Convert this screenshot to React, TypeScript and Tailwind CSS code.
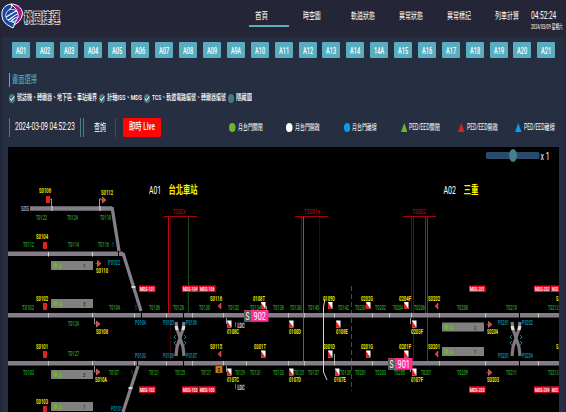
import React from 'react';

const FONT = "font-['Roboto','Noto_Sans_CJK_TC',sans-serif]";

function Narrow({ w, children, className = '' }: { w: number; children: string; className?: string }) {
  const box = React.useRef<HTMLSpanElement>(null);
  const [scale, setScale] = React.useState(0.7);
  React.useLayoutEffect(() => {
    if (box.current && box.current.offsetWidth) setScale(w / box.current.offsetWidth);
  }, [w, children]);
  return (
    <span className={`block shrink-0 whitespace-nowrap ${className}`} style={{ width: w }}>
      <span ref={box} className="inline-block origin-left" style={{ transform: `scaleX(${scale})` }}>
        {children}
      </span>
    </span>
  );
}

const nav: [string, number][] = [
  ['首頁', 13], ['時空圖', 18], ['軌道狀態', 24], ['異常狀態', 24], ['異常標記', 24], ['列車計算', 24],
];
const stations = ['A01', 'A02', 'A03', 'A04', 'A05', 'A06', 'A07', 'A08', 'A09', 'A9A', 'A10', 'A11', 'A12', 'A13', 'A14', '14A', 'A15', 'A16', 'A17', 'A18', 'A19', 'A20', 'A21'];

function Logo() {
  return (
    <svg className="h-8 w-[64px] shrink-0" viewBox="0 0 64 32">
      <path d="M11 4C3 5 0 12 3 20c2 4 6 6 10 8l2-5C7 21 5 12 12 7z" fill="#1747a0" stroke="#fff" strokeWidth="1" />
      <path d="M11 4c8 0 13 6 11 12-1 4-4 7-8 9 4-7 5-12 1-17z" fill="#ac168a" stroke="#fff" strokeWidth="1" />
      <circle cx="12" cy="15.5" r="6.3" fill="#1747a0" stroke="#fff" strokeWidth=".8" />
      <path d="M6 17c5-2 6-5 11-6M8 20c4-1 5-5 10-6M11 21c2-1 4-4 7-4" fill="none" stroke="#fff" strokeWidth="1.2" />
      <text x="24" y="21.500" fontSize="13" fontWeight="700" textLength="36" lengthAdjust="spacingAndGlyphs" fill="#262024" stroke="#e4e0e2" strokeWidth="1.6" paintOrder="stroke">桃園捷運</text>
    </svg>
  );
}

function Check({ on = true }: { on?: boolean }) {
  return (
    <svg className="h-[9px] w-[6px] shrink-0" viewBox="0 0 6 9" preserveAspectRatio="none">
      <ellipse cx="3" cy="4.5" rx="3" ry="4.5" fill="#4a7884" />
      {on && <path d="M1 4.7l1.4 1.8 2.8-4" fill="none" stroke="#fff" />}
    </svg>
  );
}

function Legend({ shape, fill, label, w }: { shape: 'dot' | 'tri'; fill: string; label: string; w: number }) {
  return (
    <div className="flex w-[57.3px] shrink-0 items-center gap-[2px] text-[8.5px] leading-[10px] text-white">
      <svg className="h-[9px] w-[6.5px] shrink-0" viewBox="0 0 6.5 9">
        {shape === 'dot' ? <ellipse cx="3.25" cy="4.5" rx="3.25" ry="4.5" fill={fill} /> : <path d="M3.25 0L6.5 9H0z" fill={fill} />}
      </svg>
      <Narrow w={w}>{label}</Narrow>
    </div>
  );
}

type Label = [number, number, number, string];
const green: Label[] = [
  [36, 220, 11, 'T0122'], [67, 220, 11, 'T0124'], [100, 220, 11, 'T0118'],
  [23, 247, 11, 'T0112'], [68, 247, 11, 'T0114'], [98, 247, 11, 'T0116'],
  [22, 310, 12, 'T0102'], [109, 310, 11, 'T0104'], [149, 310, 11, 'T0106'], [173, 310, 11, 'T0128'],
  [199, 310, 11, 'T0130'], [228, 310, 11, 'T0132'], [250, 310, 11, 'T0134'], [273, 310, 11, 'T0136'], [290, 310, 11, 'T0138'], [308, 310, 11, 'T0140'], [338, 310, 11, 'T0142'],
  [355, 310, 11, 'T0200'], [375, 310, 11, 'T0202'], [393, 310, 10, 'T0204'], [414, 310, 11, 'T0206'],
  [457, 310, 11, 'T0208'], [506, 310, 11, 'T0210'], [548, 310, 10.5, 'T0212'],
  [68, 326, 11, 'T0124'], [68, 356, 11, 'T0127'],
  [23, 375, 11, 'T0103'], [109, 375, 10, 'T0107'], [149, 375, 10, 'T0121'], [175, 375, 10, 'T0125'],
  [201, 375, 10, 'T0127'], [235, 375, 10, 'T0129'], [250, 375, 11, 'T0131'], [273, 375, 11, 'T0133'], [294, 375, 10, 'T0135'], [308, 375, 11, 'T0137'],
  [340, 375, 11, 'T0139'], [355, 375, 11, 'T0201'], [375, 375, 11, 'T0203'], [394, 375, 11, 'T0205'],
  [421, 375, 10, 'T0207'], [457, 375, 11, 'T0209'], [506, 375, 11, 'T0211'], [548, 375, 10.5, 'T0213'],
];
const cyan: Label[] = [
  [108, 265, 12, 'P0102'], [135, 325, 11, 'P0104'], [163, 325, 11, 'P0105'], [186, 325, 11, 'P0106'],
  [135, 358, 11, 'P0103'], [163, 358, 11, 'P0106'], [186, 358, 11, 'P0107'], [111, 411, 11, 'P0101'],
  [498, 325, 11, 'P0201'], [522, 325, 11, 'P0202'], [498, 358, 11, 'P0201'], [522, 358, 11, 'P0204'],
  [112, 247, 2, '1'], [135, 310, 2, '1'], [131, 375, 2, '1'],
];
const yellow: Label[] = [
  [39, 193, 12, 'S0106'], [101, 195, 12, 'S0112'], [36, 239, 12, 'S0104'], [96, 273, 12, 'S0110'],
  [36, 301, 12, 'S0102'], [96, 334, 12, 'S0108'], [36, 349, 12, 'S0101'], [95, 382, 12, 'S010A'], [36, 404, 12, 'S0103'],
  [210, 301, 12, 'S0116'], [253, 301, 12, '0108T'], [323, 301, 12, '0109D'], [361, 301, 12, '0202G'], [399, 301, 12, '0204F'], [428, 301, 12, 'S0202'],
  [227, 334, 12, '0108C'], [289, 334, 12, '0108D'], [336, 334, 12, '0108E'], [411, 334, 12, '0203F'], [487, 334, 11, 'S0204'],
  [210, 349, 12, 'S0115'], [254, 349, 12, '0301T'], [323, 349, 12, '0301D'], [361, 349, 12, '0201G'], [399, 349, 12, '0201F'], [428, 349, 12, 'S0201'],
  [227, 382, 12, '0107C'], [289, 382, 12, '0107D'], [334, 382, 12, '0107E'], [411, 382, 12, '0107F'], [487, 382, 12, 'S0203'],
  [556, 301, 2.5, 'S'], [556, 349, 2.5, 'S'],
];

function Texts({ items, fill, bold }: { items: Label[]; fill: string; bold?: boolean }) {
  return (
    <g fill={fill} fontSize="7.4" fontWeight={bold ? 600 : 500}>
      {items.map(([x, y, w, t], i) => (
        <text key={i} x={x} y={y} textLength={w} lengthAdjust="spacingAndGlyphs">{t}</text>
      ))}
    </g>
  );
}

const mds: [number, number, string][] = [
  [139, 285.5, 'MDS-101'], [182, 285.5, 'MDS-104'], [199, 285.5, 'MDS-106'], [469, 285.5, 'MDS-201'], [534, 285.5, 'MDS-202'], [551, 285.5, 'MDS'],
  [139, 386.3, 'MDS-102'], [182, 386.3, 'MDS-103'], [199, 386.3, 'MDS-105'], [469, 386.3, 'MDS-203'], [534, 386.3, 'MDS-204'], [551, 386.3, 'MDS'],
];
const boxes = [[261, 302], [328, 302], [366, 302], [404, 302], [227, 320.5], [289, 320.5], [336, 320.5], [412, 320.5], [261, 350.5], [328, 350.5], [366, 350.5], [404, 350.5], [227, 368.5], [289, 368.5], [335, 368.5], [412, 368.5]];
const platforms: [number, number, string][] = [[51, 261, '1'], [51, 299, '3'], [51, 370, '3'], [51, 402, '1'], [442, 322.5, '2'], [442, 347, '1']];

function Crossing({ x }: { x: number }) {
  return (
    <g transform={`translate(${x} 0)`}>
      <path d="M-4 322L-3 329L3 347L4 356M4 322L3 329L-3 347L-4 356" stroke="#817981" strokeWidth="3.2" fill="none" />
      <path d="M-4 326l1 4M4 326l-1 4" stroke="#ddd" strokeWidth="3" />
      <path d="M-4 335l-2 2 2 2M-4 341l-2 2 2 2M4 335l2 2-2 2M4 341l2 2-2 2" stroke="#087e8c" fill="none" />
    </g>
  );
}

function TrackMap() {
  return (
    <svg className="block h-[265px] w-[551px] bg-black" viewBox="8 147 551 265">
      {/* platform screen overlays */}
      <g shapeRendering="crispEdges">
        <path d="M164 216.5H197M295 216.5H328M403 216.5H436" stroke="#a8000e" />
        <path d="M168.5 217V313" stroke="#bd0a12" />
        <path d="M170.5 217V361M319.5 217V313" stroke="#3c0507" />
        <path d="M188.5 217V313" stroke="#174b14" />
        <path d="M301.5 217V313" stroke="#123a12" />
        <path d="M303.5 217V361" stroke="#2b8c23" />
        <path d="M411.5 217V313M413.5 217V361" stroke="#78000d" />
        <path d="M425.5 217V313M427.5 217V361" stroke="#1d5d19" />
        <path d="M351.5 286V391" stroke="#145e5e" strokeDasharray="5 3" />
      </g>
      <g fill="#d80012" fontSize="7">
        <text x="173" y="214" textLength="13" lengthAdjust="spacingAndGlyphs">TSS0V</text>
        <text x="304" y="214" textLength="16" lengthAdjust="spacingAndGlyphs">TSS01a</text>
        <text x="412" y="214" textLength="14" lengthAdjust="spacingAndGlyphs">TSS02</text>
      </g>

      {/* tracks */}
      <g stroke="#857d87" strokeWidth="4.5" fill="none">
        <path d="M30 208.5H112" /><path d="M8 253.7H123" /><path d="M8 315.3H559" /><path d="M8 363.3H559" />
        <path d="M112 207L119 251" strokeWidth="3.3" /><path d="M123 253L141 311" strokeWidth="3.3" />
        <path d="M138 366L123 412" strokeWidth="3.3" />
      </g>
      <g stroke="#d5d5d5" fill="none">
        <path d="M52 206v5M100 206v5M48.500 252v4.500M92.500 252v4.500" />
        {[48, 92, 134, 166, 192, 223, 246, 288, 304, 334, 372, 389, 411, 439, 485, 538].map((x) => <path key={x} d={`M${x + 0.5} 313v4.500M${x + 0.5} 361v4.500`} strokeWidth=".8" />)}
        <path d="M131.500 287h4M128.500 388h4" strokeWidth="2" />
        <path d="M325 299L323.500 307V372L327 380" />
        <path d="M51.500 207v-8h-2M99.500 207v-8h2M94.500 318v6M94.500 366v6M226.500 318v6M226.500 366v6M410.500 318v6M410.500 366v6M334.500 354v7M266.500 306v7" strokeWidth=".7" />
      </g>
      <path d="M118.500 251v5M141.500 313v5M137.500 361v5M183.500 313v5M183.500 361v5M519.500 313v5M519.500 361v5" stroke="#000" />

      <Crossing x={180} />
      <Crossing x={516} />

      {platforms.map(([x, y, n], i) => (
        <g key={i}>
          <rect x={x} y={y} width="42" height="9" fill="#808080" />
          <ellipse cx={x + 4.5} cy={y + 4.5} rx="2.200" ry="2.800" fill="#6fb52c" />
          <path d={`M${x + 9.500} ${y + 1.800}l2 5.500h-4z`} fill="#6fb52c" />
          <text x={x + 32} y={y + 7} fontSize="6" fill="#151515" textLength="2.5" lengthAdjust="spacingAndGlyphs">{n}</text>
        </g>
      ))}

      {/* signals */}
      {[[46, 196], [43, 242], [43, 303], [43, 351], [43, 406]].map(([x, y]) => <rect key={y} x={x} y={y} width="4" height="7" fill="#dc2320" />)}
      {[[102, 200], [97, 263.5], [96, 324], [96, 372], [488, 324.5], [488, 372.5]].map(([x, y]) => (
        <path key={`${x}-${y}`} d={`M${x - 1.500} ${y}h2v-3l3.500 3-3.500 3v-3`} fill="#f03030" stroke="#f5a09b" strokeWidth=".5" />
      ))}
      {[[218, 306], [218, 354], [435, 306], [435, 354]].map(([x, y]) => <path key={`${x}-${y}`} d={`M${x} ${y}l3-3v6z`} fill="#e92727" stroke="#e99" strokeWidth=".4" />)}
      <Texts items={green} fill="#2ba826" />
      {boxes.map(([x, y], i) => (
        <g key={i}><rect x={x} y={y} width="4.500" height="7" fill="#fff" /><path d={`M${x} ${y + 0.5}v6.500h4.500z`} fill="#e02822" /></g>
      ))}

      <Texts items={cyan} fill="#079cba" />
      <Texts items={yellow} fill="#fff200" bold />

      {mds.map(([x, y, t], i) => {
        const w = t.length > 3 ? 16.5 : 8;
        return (
          <g key={i}>
            <rect x={x} y={y} width={w} height="6.500" fill="#ee0925" />
            <text x={x + 1} y={y + 5.600} fontSize="6.2" fontWeight="600" fill="#fff" textLength={w - 2} lengthAdjust="spacingAndGlyphs">{t}</text>
          </g>
        );
      })}

      <g fontSize="6.5" fill="#fff">
        <rect x="237" y="322" width="8" height="6" fill="#152331" /><text x="237.500" y="327.500" textLength="7" lengthAdjust="spacingAndGlyphs">LDC</text>
        <rect x="237" y="384" width="8" height="6" fill="#152331" /><text x="237.500" y="389.500" textLength="7" lengthAdjust="spacingAndGlyphs">LDC</text>
        <path d="M235.500 322v5M235.500 384v5" stroke="#aaa" strokeWidth=".6" />
      </g>
      <rect x="215.500" y="366" width="7" height="7" fill="#c47816" />
      <path d="M218 368h2v1.500h-2zM218 370.500h2v1.500h-2z" fill="#422400" />

      {/* trains */}
      {[[244, 310, '902'], [388, 358, '901']].map(([x, y, n]) => (
        <g key={n} fontSize="11.5">
          <rect x={x} y={y} width="24.500" height="11.800" fill="#ff2e98" />
          <rect x={x} y={Number(y) + 0.5} width="7" height="10.800" fill="#575757" />
          <text x={Number(x) + 1.500} y={Number(y) + 9.800} fill="#fff" textLength="4" lengthAdjust="spacingAndGlyphs">S</text>
          <text x={Number(x) + 9.500} y={Number(y) + 10} fill="#fff" textLength="12.500" lengthAdjust="spacingAndGlyphs">{n}</text>
        </g>
      ))}

      <text x="21" y="211" fontSize="6.800" fill="#c9dcf0" textLength="8" lengthAdjust="spacingAndGlyphs">S0S</text>
      <g fontSize="11">
        <text x="149" y="194" fill="#fff" textLength="12" lengthAdjust="spacingAndGlyphs">A01</text>
        <text x="168.500" y="194" fill="#fff000" fontWeight="700" textLength="29" lengthAdjust="spacingAndGlyphs">台北車站</text>
        <text x="443.500" y="194" fill="#fff" textLength="12.500" lengthAdjust="spacingAndGlyphs">A02</text>
        <text x="463.500" y="194" fill="#fff000" fontWeight="700" textLength="15" lengthAdjust="spacingAndGlyphs">三重</text>
      </g>
      <rect x="486" y="152" width="53.500" height="7" rx="1.500" fill="#294a6b" />
      <ellipse cx="513" cy="155.500" rx="4" ry="6.500" fill="#457f8a" />
      <text x="540.500" y="160" fontSize="10" fill="#fff" textLength="9" lengthAdjust="spacingAndGlyphs">x 1</text>
    </svg>
  );
}

export default function App() {
  return (
    <div className={`flex h-[412px] w-[566px] flex-col overflow-hidden bg-[#242536] ${FONT}`}>
      <header className="flex h-[37px] shrink-0">
        <Logo />
        <nav className="ml-[185px] flex shrink-0 gap-[8.1px]">
          {nav.map(([t, w], i) => (
            <div key={t} className={`h-[27px] w-10 shrink-0 pl-[6px] pt-[9px] text-[9.5px] leading-[14px] text-white ${i === 0 ? 'border-b-2 border-[#5aafc1]' : ''}`}>
              <Narrow w={w}>{t}</Narrow>
            </div>
          ))}
        </nav>
        <div className="ml-[1.5px] shrink-0 pt-[10px] text-white">
          <Narrow w={25} className="text-[11px] leading-[12px]">04:52:24</Narrow>
          <Narrow w={32} className="mt-[2px] text-[6.5px] leading-[7px]">2024/03/09 星期六</Narrow>
        </div>
      </header>
      <main className="ml-[2px] flex h-[375px] w-[563px] flex-col bg-[#262f42]">
        <div className="flex shrink-0 gap-[5.88px] pl-[10px] pt-[5px]">
          {stations.map((s) => (
            <button key={s} className="flex h-4 w-[18px] shrink-0 items-center justify-center rounded-[1px] bg-[#58aec0] pt-[2px] text-[8.5px] font-medium leading-none text-white">
              <Narrow w={10}>{s}</Narrow>
            </button>
          ))}
        </div>
        <h2 className="ml-[7px] mt-[15px] h-[14px] shrink-0 border-l border-[#58aec0] pl-[2px] text-[10.5px] leading-[14px] text-[#58aec0]">
          <Narrow w={25}>畫面選擇</Narrow>
        </h2>
        <div className="mt-[6px] flex h-[10px] shrink-0 items-center gap-[2px] pl-[7px] text-[8px] font-medium leading-[10px] text-white">
          <Check /><Narrow w={80}>號誌機、轉轍器、地下區、車站邊界</Narrow>
          <Check /><Narrow w={35}>計軸ISS、MDS</Narrow>
          <Check /><Narrow w={74}>TCS、軌道電路編號、轉轍器編號</Narrow>
          <Check on={false} /><Narrow w={16}>隱藏圖</Narrow>
        </div>
        <div className="mt-[14px] flex h-[20px] shrink-0 items-center pl-[7px] text-white">
          <div className="flex h-[19px] w-[72px] shrink-0 items-center border-x border-[#4b7d8c] pl-[5px] text-[11px]">
            <Narrow w={60}>2024-03-09 04:52:23</Narrow>
          </div>
          <button className="ml-[2px] flex h-[19px] w-[33px] shrink-0 items-center justify-center border-x border-l-[#4b7d8c] border-r-[#36515f] text-[10px]">
            <Narrow w={12}>查詢</Narrow>
          </button>
          <button className="ml-[7px] flex h-[19px] w-[38px] shrink-0 items-center justify-center rounded-[1px] bg-[#ff0505] text-[10.5px] font-medium">
            <Narrow w={26}>即時 Live</Narrow>
          </button>
          <div className="ml-[68px] flex shrink-0">
            <Legend shape="dot" fill="#6fb52c" label="月台門關閉" w={25} />
            <Legend shape="dot" fill="#ffffff" label="月台門開啟" w={25} />
            <Legend shape="dot" fill="#079ee8" label="月台門離線" w={25} />
            <Legend shape="tri" fill="#6fb52c" label="PED/EED關閉" w={31} />
            <Legend shape="tri" fill="#d82323" label="PED/EED開啟" w={31} />
            <Legend shape="tri" fill="#079ee8" label="PED/EED離線" w={31} />
          </div>
        </div>
        <div className="ml-[6px] mt-[10px] w-[551px] shrink-0"><TrackMap /></div>
      </main>
    </div>
  );
}
